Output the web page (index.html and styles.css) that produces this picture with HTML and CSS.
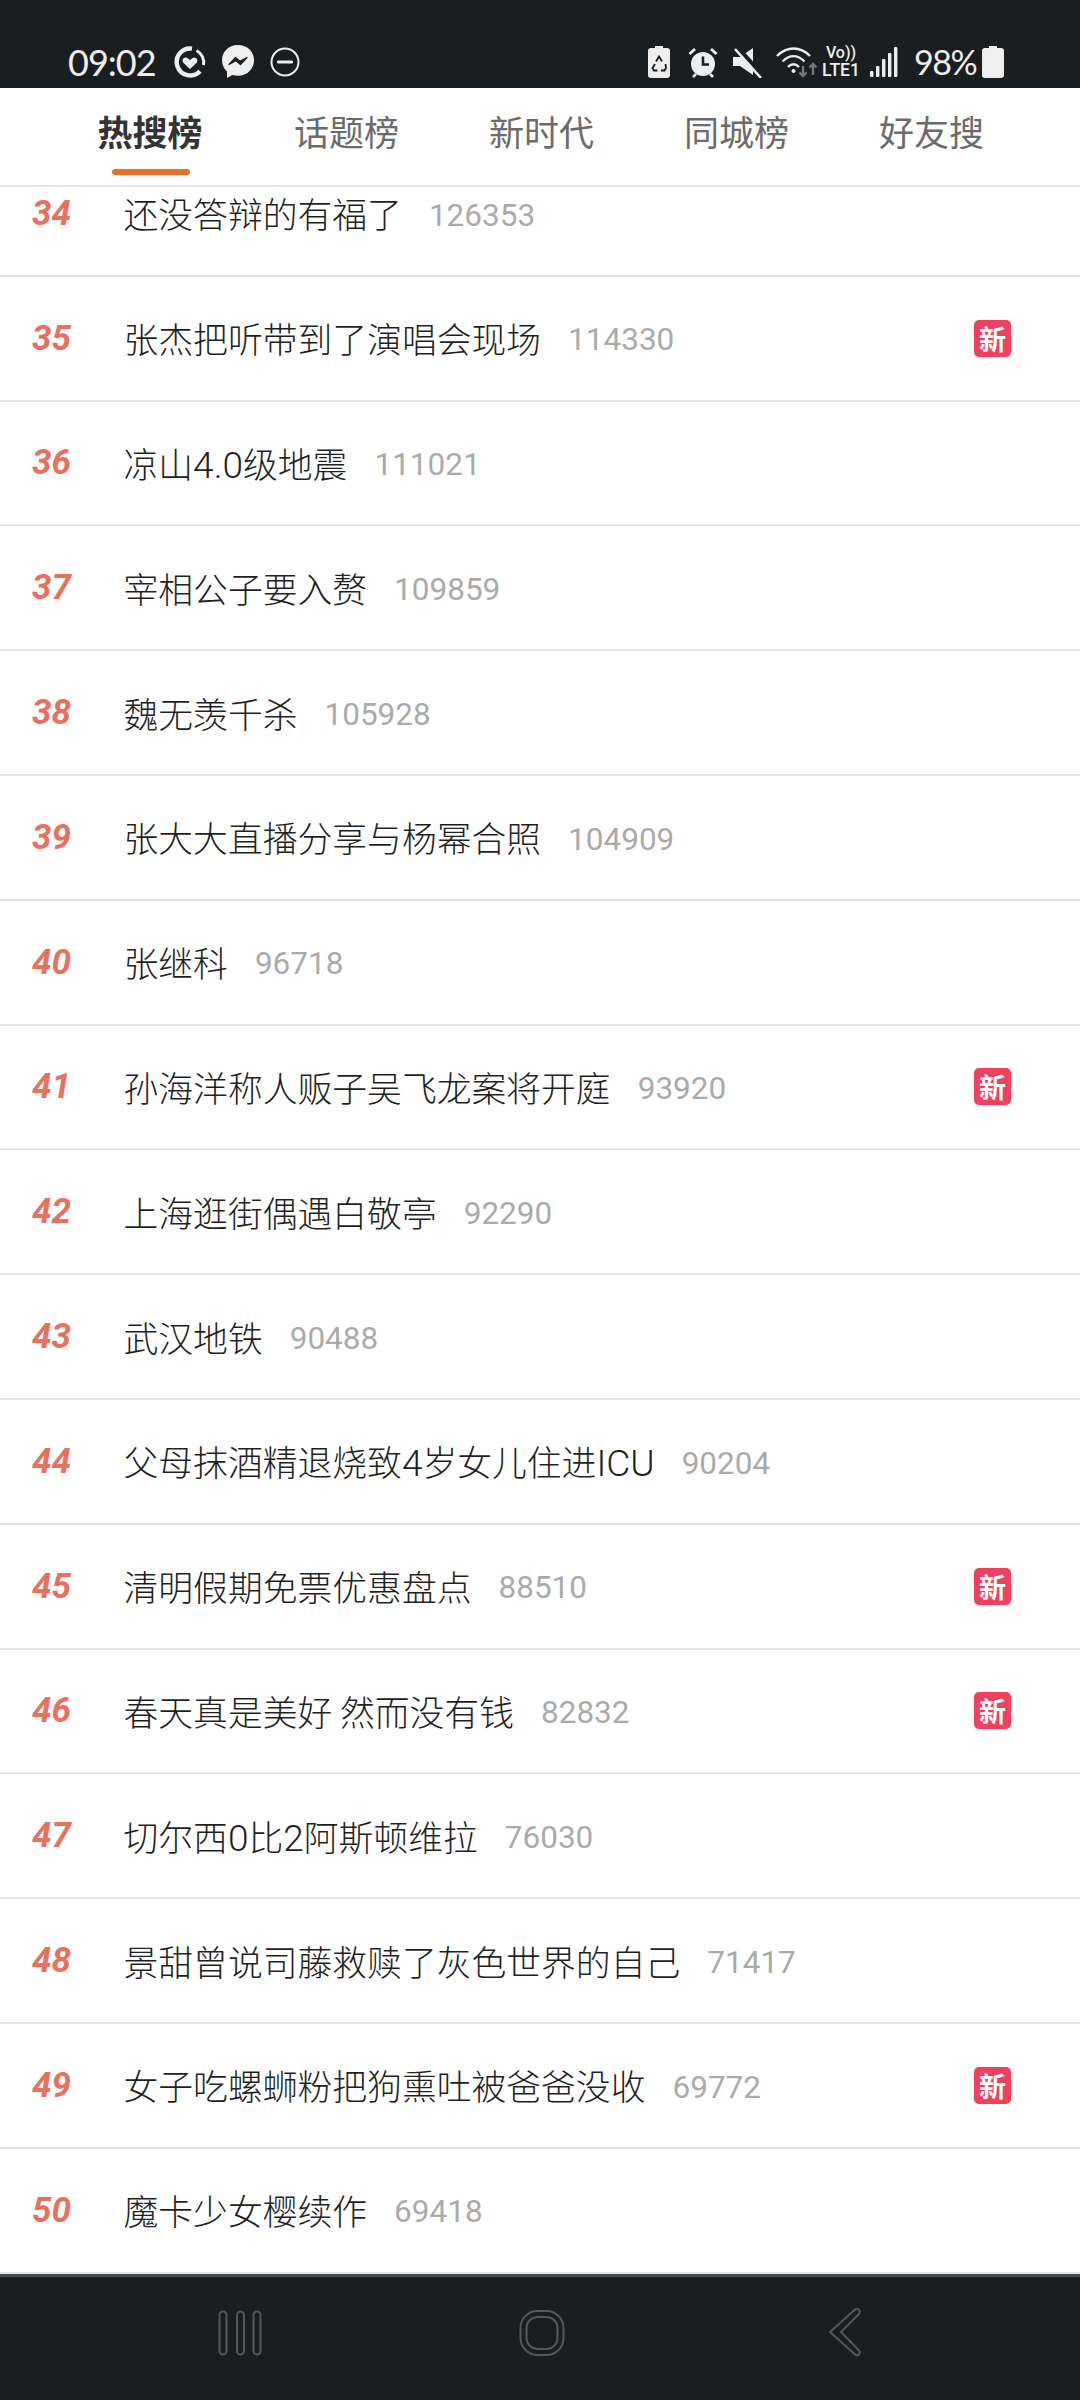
FILE: index.html
```html
<!DOCTYPE html>
<html lang="zh">
<head>
<meta charset="utf-8">
<title>热搜榜</title>
<link rel="stylesheet" href="styles.css">
</head>
<body>
<div class="phone">
  <header class="status">
    <div class="status-left">
      <span class="time">09:02</span>
      <svg class="ic" width="34" height="34" viewBox="0 0 34 34"><g fill="none" stroke="#eee"><path d="M19 3.600A13.500 13.500 0 1 0 27 26.300" stroke-width="4.400"/><path d="M23.500 5.500A13.500 13.500 0 0 1 30.500 20" stroke-width="3"/></g><path d="M17 24l-6.200-5.800c-3.200-3.200.8-7.400 4.200-4.800l2 1.600 2-1.600c3.400-2.600 7.400 1.600 4.200 4.800z" fill="#eee"/></svg>
      <svg class="ic msg" width="34" height="36" viewBox="0 0 34 36"><path d="M17 1C7.800 1 1 7.600 1 16.300c0 4.600 1.900 8.500 5 11.200V34l5.400-3c1.800.5 3.600.8 5.600.8 9.200 0 16-6.700 16-15.500S26.200 1 17 1z" fill="#eee"/><path d="M8 20.500l6.500-7 4.500 3.800 7-3.800-6.500 7-4.500-3.800z" fill="#1b1e20" stroke="#1b1e20" stroke-width="1.200" stroke-linejoin="round"/></svg>
      <svg class="ic dnd" width="30" height="30" viewBox="0 0 30 30"><circle cx="15" cy="15" r="13.500" fill="none" stroke="#eee" stroke-width="2"/><rect x="7" y="13.500" width="16" height="3" rx="1.200" fill="#eee"/></svg>
    </div>
    <div class="status-right">
      <svg class="ic" width="22" height="32" viewBox="0 0 22 32"><path d="M7 0h8v2h4a3 3 0 0 1 3 3v24a3 3 0 0 1-3 3H3a3 3 0 0 1-3-3V5a3 3 0 0 1 3-3h4z" fill="#eee"/><path d="M8 15.500l3-5 3 5M7 18l-2.500 4 1.500 2.500h3.500M17.500 18l.5 4-1.500 2.500H13" fill="none" stroke="#1b1e20" stroke-width="1.800"/></svg>
      <svg class="ic alarm" width="30" height="32" viewBox="0 0 30 32"><circle cx="15" cy="18" r="12" fill="#eee"/><path d="M15 10.500v8h6" fill="none" stroke="#1b1e20" stroke-width="2.600"/><path d="M1.500 8L7 3M28.500 8L23 3M5 31l3-3M25 31l-3-3" stroke="#eee" stroke-width="2.800" fill="none"/></svg>
      <svg class="ic mute" width="30" height="32" viewBox="0 0 30 32"><path d="M0 11h7l13-9v27l-13-9H0z" fill="#eee"/><path d="M3 1l26 29" stroke="#1b1e20" stroke-width="6"/><path d="M2 3l26 29" stroke="#eee" stroke-width="2.600"/></svg>
      <svg class="ic wifi" width="42" height="32" viewBox="0 0 42 32"><path d="M1 10C11 0 24 0 34 10M6.500 15.500c7-7 15-7 22 0M12 21c3.500-3.500 7.500-3.500 11 0" fill="none" stroke="#eee" stroke-width="2.400"/><circle cx="17.500" cy="25" r="2" fill="#eee"/><path d="M27 20v10m-3.500-3.500l3.500 3.500 3.500-3.500" fill="none" stroke="#777" stroke-width="2.400"/><path d="M37 29V18m-3.500 3.500l3.500-3.500 3.500 3.500" fill="none" stroke="#777" stroke-width="2.400"/></svg>
      <div class="volte"><span class="vo">Vo))</span><span class="lte">LTE1</span></div>
      <svg class="ic signal" width="28" height="30" viewBox="0 0 28 30"><rect x="0" y="24" width="3.400" height="6" rx="1" fill="#eee"/><rect x="6" y="19" width="3.400" height="11" rx="1" fill="#eee"/><rect x="12" y="12" width="3.400" height="18" rx="1" fill="#eee"/><rect x="18" y="6" width="3.400" height="24" rx="1" fill="#eee"/><rect x="24" y="0" width="3.400" height="30" rx="1" fill="#eee"/></svg>
      <span class="pct">98%</span>
      <svg class="ic batt" width="22" height="32" viewBox="0 0 22 32"><path d="M7 0h8v2h4a3 3 0 0 1 3 3v24a3 3 0 0 1-3 3H3a3 3 0 0 1-3-3V5a3 3 0 0 1 3-3h4z" fill="#eee"/></svg>
    </div>
  </header>

  <nav class="tabs">
    <a class="tab active">热搜榜</a>
    <a class="tab">话题榜</a>
    <a class="tab">新时代</a>
    <a class="tab">同城榜</a>
    <a class="tab">好友搜</a>
  </nav>

  <main class="scroller">
    <ul class="list">
      <li class="row"><span class="rank">34</span><span class="title">还没答辩的有福了</span><span class="count">126353</span></li>
      <li class="row"><span class="rank">35</span><span class="title">张杰把听带到了演唱会现场</span><span class="count">114330</span><span class="badge">新</span></li>
      <li class="row"><span class="rank">36</span><span class="title">凉山<span class="lat">4.0</span>级地震</span><span class="count">111021</span></li>
      <li class="row"><span class="rank">37</span><span class="title">宰相公子要入赘</span><span class="count">109859</span></li>
      <li class="row"><span class="rank">38</span><span class="title">魏无羡千杀</span><span class="count">105928</span></li>
      <li class="row"><span class="rank">39</span><span class="title">张大大直播分享与杨幂合照</span><span class="count">104909</span></li>
      <li class="row"><span class="rank">40</span><span class="title">张继科</span><span class="count">96718</span></li>
      <li class="row"><span class="rank">41</span><span class="title">孙海洋称人贩子吴飞龙案将开庭</span><span class="count">93920</span><span class="badge">新</span></li>
      <li class="row"><span class="rank">42</span><span class="title">上海逛街偶遇白敬亭</span><span class="count">92290</span></li>
      <li class="row"><span class="rank">43</span><span class="title">武汉地铁</span><span class="count">90488</span></li>
      <li class="row"><span class="rank">44</span><span class="title">父母抹酒精退烧致<span class="lat">4</span>岁女儿住进<span class="lat">ICU</span></span><span class="count">90204</span></li>
      <li class="row"><span class="rank">45</span><span class="title">清明假期免票优惠盘点</span><span class="count">88510</span><span class="badge">新</span></li>
      <li class="row"><span class="rank">46</span><span class="title">春天真是美好 然而没有钱</span><span class="count">82832</span><span class="badge">新</span></li>
      <li class="row"><span class="rank">47</span><span class="title">切尔西<span class="lat">0</span>比<span class="lat">2</span>阿斯顿维拉</span><span class="count">76030</span></li>
      <li class="row"><span class="rank">48</span><span class="title">景甜曾说司藤救赎了灰色世界的自己</span><span class="count">71417</span></li>
      <li class="row"><span class="rank">49</span><span class="title">女子吃螺蛳粉把狗熏吐被爸爸没收</span><span class="count">69772</span><span class="badge">新</span></li>
      <li class="row"><span class="rank">50</span><span class="title">魔卡少女樱续作</span><span class="count">69418</span></li>
    </ul>
  </main>

  <footer class="navbar">
    <svg width="46" height="46" viewBox="0 0 46 46"><g fill="none" stroke="#55585a" stroke-width="2"><rect x="1.500" y="1.500" width="7" height="43" rx="3.500"/><rect x="19" y="1.500" width="7" height="43" rx="3.500"/><rect x="35.500" y="1.500" width="7" height="43" rx="3.500"/></g></svg>
    <svg width="46" height="48" viewBox="0 0 46 48"><g fill="none" stroke="#55585a" stroke-width="2"><rect x="1.500" y="2" width="43" height="44" rx="17"/><rect x="7.500" y="8" width="31" height="32" rx="11"/></g></svg>
    <svg width="34" height="50" viewBox="0 0 34 50"><path d="M27 2.500c2-2 6 .5 4.500 4L13 25l18.500 19c1.500 3-2.500 5.500-4.500 3.500L2 25z" fill="none" stroke="#55585a" stroke-width="2"/></svg>
  </footer>
</div>
</body>
</html>
```
FILE: styles.css
```css
* { box-sizing: border-box; }
html, body { margin: 0; padding: 0; }
body {
  width: 1080px;
  height: 2400px;
  overflow: hidden;
  background: #fff;
  font-family: "Noto Sans CJK SC", "Roboto", sans-serif;
}
.phone { display: flex; flex-direction: column; height: 2400px; }

.status {
  flex: 0 0 88px;
  background: #1b1e20;
  color: #eee;
  display: flex;
  justify-content: space-between;
  align-items: flex-end;
  padding: 0 76px 8px 68px;
}
.status-left, .status-right { display: flex; align-items: center; height: 36px; }
.ic { display: block; flex: none; }
.time {
  font: 400 36px/36px "Lato", "Roboto", sans-serif;
  width: 105px;
  letter-spacing: -1px;
}
.msg { margin-left: 14px; }
.dnd { margin-left: 15px; }
.alarm { margin-left: 18px; }
.mute { margin-left: 15px; }
.wifi { margin-left: 13px; }
.volte {
  display: flex;
  flex-direction: column;
  align-items: center;
  margin-left: 4px;
  width: 38px;
  color: #eee;
  font-family: "Roboto", sans-serif;
  font-weight: 500;
}
.vo { font-size: 16px; line-height: 16px; }
.lte { font-size: 17.500px; line-height: 18px; white-space: nowrap; }
.signal { margin-left: 10px; }
.pct {
  font: 400 34px/36px "Lato", "Roboto", sans-serif;
  letter-spacing: -1.500px;
  margin-left: 16px;
  width: 68px;
}

.tabs {
  flex: 0 0 99px;
  display: grid;
  grid-template-columns: repeat(5, 195px);
  padding-left: 54px;
  border-bottom: 2px solid #e5e5e5;
  background: #fff;
  position: relative;
  z-index: 1;
}
.tab {
  position: relative;
  text-align: center;
  font-size: 35px;
  line-height: 50px;
  padding-top: 18px;
  color: #6b6b6b;
}
.tab.active { color: #333; font-weight: 700; margin-left: -3px; }
.tab.active::after {
  content: "";
  position: absolute;
  left: 61px;
  top: 81px;
  width: 78px;
  height: 6px;
  border-radius: 3px;
  background: #e8702d;
}

.scroller { flex: 1 1 0; overflow: hidden; min-height: 0; }
.list { list-style: none; margin: -35px 0 0; padding: 0; }
.row {
  height: 124.8px;
  display: flex;
  align-items: center;
  border-bottom: 2px solid #e5e5e5;
  padding: 0 0 0 32px;
}
.rank {
  font: italic 700 35px/1 "Roboto", sans-serif;
  color: #e8705f;
  width: 91.500px;
  flex: none;
}
.title {
  font-size: 34.8px;
  line-height: 50px;
  font-weight: 300;
  color: #1f1f1f;
  white-space: pre;
}
.lat { font-family: "Roboto", sans-serif; font-size: 37px; font-weight: 300; line-height: 1; }
.count {
  font: 400 31.500px/1 "Roboto", sans-serif;
  color: #aaa;
  margin-left: 27px;
  padding-top: 4px;
}
.badge {
  margin-left: auto;
  margin-right: 69px;
  width: 37px;
  height: 37px;
  border-radius: 5px;
  background: #f0405f;
  color: #fff;
  font-size: 27px;
  line-height: 37px;
  text-align: center;
  font-weight: 700;
}

.navbar {
  flex: 0 0 126px;
  background: #1b1e20;
  border-top: 3px solid #44494c;
  display: flex;
  align-items: flex-start;
  padding-top: 33px;
}
.navbar svg { flex: none; }
.navbar svg:nth-child(1) { margin-left: 218px; }
.navbar svg:nth-child(2) { margin-left: 255px; margin-top: -1px; }
.navbar svg:nth-child(3) { margin-left: 263px; margin-top: -3px; }
```
